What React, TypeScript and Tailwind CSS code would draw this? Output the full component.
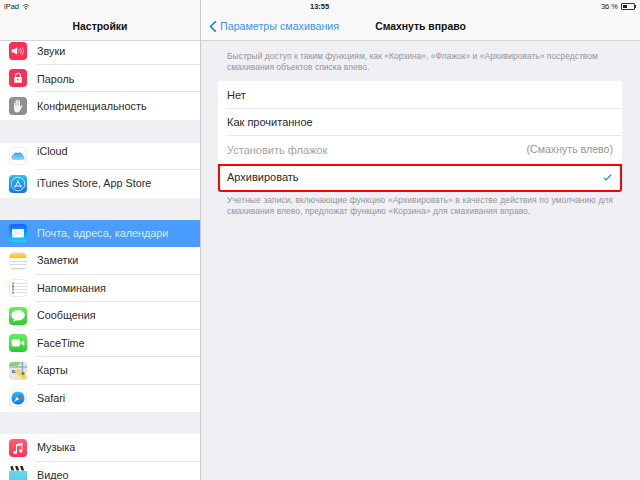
import type { ReactNode } from 'react'

const font = "font-['Liberation_Sans',Arial,sans-serif]"

function Tile({ className, children }: { className: string; children?: ReactNode }) {
  return (
    <div className={`flex size-[18px] shrink-0 items-center justify-center overflow-hidden rounded-[4px] ${className}`}>
      {children}
    </div>
  )
}

const SoundIcon = () => (
  <Tile className="bg-[#fe2d55]">
    <svg viewBox="0 0 18 18" className="size-[18px]" fill="none">
      <path d="M2.6 7.4h2.2L8.2 5.2v7.6L4.8 10.6H2.6z" fill="#fff" />
      <path d="M9.6 7.2a2.6 2.6 0 0 1 0 3.6M11.2 6a4.4 4.4 0 0 1 0 6M12.8 4.8a6.2 6.2 0 0 1 0 8.4" stroke="#ffc4d0" strokeWidth="0.9" />
    </svg>
  </Tile>
)

const LockIcon = () => (
  <Tile className="bg-[#fe2d55]">
    <svg viewBox="0 0 18 18" className="size-[18px]" fill="none">
      <path d="M6.6 8.5V6.6a2.4 2.4 0 0 1 4.8 0v1.9" stroke="#fff" strokeWidth="1.1" />
      <rect x="5.2" y="8" width="7.6" height="5.8" rx="0.6" fill="#fff" />
      <circle cx="9" cy="10.6" r="0.9" fill="#fe2d55" />
    </svg>
  </Tile>
)

const HandIcon = () => (
  <Tile className="bg-[#8e8e93]">
    <svg viewBox="0 0 18 18" className="size-[18px]" fill="#f2f2f2">
      <path d="M5 6.2c0-.8 1.2-.8 1.2 0v2.5h.4V3.6c0-.8 1.2-.8 1.2 0v4.9h.4V2.8c0-.8 1.2-.8 1.2 0v5.7h.4V3.8c0-.8 1.2-.8 1.2 0V10l1-1.4c.6-.8 1.7-.1 1.2.7l-2 3.9c-.6 1.2-1.3 2.3-2.9 2.3-2.2 0-3.3-1.4-3.3-3.4z" />
    </svg>
  </Tile>
)

const CloudIcon = () => (
  <Tile className="border border-[#ececec] bg-white">
    <svg viewBox="0 0 18 18" className="size-[18px]">
      <defs>
        <linearGradient id="cloudFill" x1="0" y1="0" x2="0" y2="1">
          <stop offset="0" stopColor="#2fa8f4" />
          <stop offset="1" stopColor="#8fd8fb" />
        </linearGradient>
      </defs>
      <path d="M4.4 13.6a3 3 0 0 1-.6-5.9 3.2 3.2 0 0 1 4.7-2.2 4 4 0 0 1 5.8 2.6 2.8 2.8 0 0 1-.4 5.5z" fill="url(#cloudFill)" />
    </svg>
  </Tile>
)

const AppStoreIcon = () => (
  <Tile className="bg-gradient-to-b from-[#30bdf9] to-[#1d70ec]">
    <svg viewBox="0 0 18 18" className="size-[18px]" fill="none" stroke="#fff">
      <circle cx="9" cy="9" r="6.8" strokeWidth="0.7" />
      <path d="M6 12.6 9.2 5.6M12 12.6 8.8 5.6M5 11h8" strokeWidth="0.9" />
    </svg>
  </Tile>
)

const MailIcon = () => (
  <Tile className="bg-gradient-to-b from-[#1d62f0] to-[#19d5fd]">
    <svg viewBox="0 0 18 18" className="size-[18px]">
      <rect x="3" y="5" width="12" height="8.4" rx="0.7" fill="#fff" />
      <path d="M3.2 5.4 9 10l5.8-4.6M3.2 13 7 8.7M14.8 13 11 8.7" stroke="#9cc4f7" strokeWidth="0.5" fill="none" />
    </svg>
  </Tile>
)

const NotesIcon = () => (
  <Tile className="border border-[#ececec] bg-white">
    <div className="flex size-full flex-col">
      <div className="h-[5px] shrink-0 bg-gradient-to-b from-[#fedb4c] to-[#fdc40b]" />
      <div className="mt-[3px] h-px bg-[#d6d6d6]" />
      <div className="mt-[3px] h-px bg-[#d6d6d6]" />
      <div className="mt-[3px] h-px bg-[#d6d6d6]" />
    </div>
  </Tile>
)

const RemindersIcon = () => (
  <Tile className="border border-[#ececec] bg-white">
    <svg viewBox="0 0 18 18" className="size-[18px]">
      <rect x="2.2" y="2.6" width="2.6" height="2.6" rx="0.8" fill="#fe9a1c" />
      <rect x="2.2" y="6" width="2.6" height="2.6" rx="0.8" fill="#27a6f5" />
      <rect x="2.2" y="9.4" width="2.6" height="2.6" rx="0.8" fill="#7ad13f" />
      <rect x="2.2" y="12.8" width="2.6" height="2.6" rx="0.8" fill="#cc73e1" />
      <path d="M6 3.9h12M6 7.3h12M6 10.7h12M6 14.1h12" stroke="#d4d4d4" strokeWidth="0.8" />
    </svg>
  </Tile>
)

const MessagesIcon = () => (
  <Tile className="bg-gradient-to-b from-[#6cec5c] to-[#22cc30]">
    <svg viewBox="0 0 18 18" className="size-[18px]">
      <path d="M9 3c3.9 0 6.8 2.3 6.8 5.2s-2.9 5.2-6.8 5.2c-.6 0-1.2 0-1.8-.2-.8.8-2 1.3-3.4 1.3.7-.6 1.1-1.4 1.2-2.2-1.6-.9-2.8-2.4-2.8-4.1C2.2 5.3 5.1 3 9 3z" fill="#fff" />
    </svg>
  </Tile>
)

const FaceTimeIcon = () => (
  <Tile className="bg-gradient-to-b from-[#6cec5c] to-[#22cc30]">
    <svg viewBox="0 0 18 18" className="size-[18px]" fill="#fff">
      <rect x="2.6" y="5.6" width="8.6" height="6.8" rx="1.3" />
      <path d="m11.8 8.4 3.4-2.4v6l-3.4-2.4z" />
    </svg>
  </Tile>
)

const MapsIcon = () => (
  <Tile className="bg-[#efe9d8]">
    <svg viewBox="0 0 18 18" className="size-[18px]">
      <rect width="18" height="18" fill="#ece5d2" />
      <path d="M0 0h13L8 4H0z" fill="#8ccf6e" />
      <path d="M0 5h18" stroke="#5aa5e8" strokeWidth="1.2" />
      <path d="M3 8h8v3H3z" fill="#4f8fe6" />
      <path d="M5 9 15 18h3v-3L9 7z" fill="#fcd84a" />
      <path d="M13.5 0v12" stroke="#7fa7d9" strokeWidth="1.4" />
      <circle cx="14" cy="11.5" r="1.6" fill="#2f7de1" />
      <path d="M15.5 0H18v4z" fill="#f6c7d0" />
    </svg>
  </Tile>
)

const SafariIcon = () => (
  <Tile className="border border-[#ececec] bg-white">
    <svg viewBox="0 0 18 18" className="size-[18px]">
      <defs>
        <linearGradient id="safariFill" x1="0" y1="0" x2="0" y2="1">
          <stop offset="0" stopColor="#1fc4f8" />
          <stop offset="1" stopColor="#1d6ff0" />
        </linearGradient>
      </defs>
      <circle cx="9" cy="9" r="7.4" fill="url(#safariFill)" />
      <path d="M13.6 4.4 7.8 7.8 10.2 10.2z" fill="#fe3b30" />
      <path d="M4.4 13.6 7.8 7.8 10.2 10.2z" fill="#fff" />
    </svg>
  </Tile>
)

const MusicIcon = () => (
  <Tile className="bg-gradient-to-b from-[#fe5f6f] to-[#fd2d55]">
    <svg viewBox="0 0 18 18" className="size-[18px]" fill="#fff">
      <path d="M7 5.2 13.4 3.8v8.2a1.8 1.5 0 1 1-1-1.3V6.2L8 7.2v6.2a1.8 1.5 0 1 1-1-1.3z" />
    </svg>
  </Tile>
)

const VideoIcon = () => (
  <Tile className="rounded-b-none bg-gradient-to-b from-[#62e2ee] to-[#5ac8ea]">
    <svg viewBox="0 0 18 18" className="size-[18px]">
      <rect width="18" height="5" fill="#fff" />
      <path d="M1 0h2.6l1.6 4.6H2.6zM6 0h2.6l1.6 4.6H7.6zM11 0h2.6l1.6 4.6h-2.6z" fill="#222" />
    </svg>
  </Tile>
)

function Row({
  icon,
  label,
  active,
  last,
  labelClass = '',
}: {
  icon: ReactNode
  label: string
  active?: boolean
  last?: boolean
  labelClass?: string
}) {
  return (
    <div className={`flex h-[27.5px] shrink-0 items-center pl-[9px] ${active ? 'bg-[#4a9dfd]' : 'bg-white'}`}>
      {icon}
      <div
        className={`ml-[10px] flex h-full flex-1 items-center text-[10.8px] ${labelClass} ${
          active ? 'text-[#d9ebff]' : 'text-[#2a2a2a]'
        } ${last || active ? 'pb-px' : 'border-b border-[#e3e3e5]'}`}
      >
        {label}
      </div>
    </div>
  )
}

function OptionRow({ children, border, className = '' }: { children: ReactNode; border?: boolean; className?: string }) {
  return (
    <div className={`flex h-[27.5px] items-center justify-between pr-[9px] text-[11px] ${border ? 'border-b border-[#e9e9eb]' : ''} ${className}`}>
      {children}
    </div>
  )
}

export default function App() {
  return (
    <div className={`flex h-[480px] w-[640px] overflow-hidden bg-[#efeff4] ${font}`}>
      {/* left list */}
      <aside className="flex h-full w-[201px] shrink-0 flex-col overflow-hidden border-r border-[#c9c9cc]">
        <header className="h-[41px] shrink-0 border-b border-[#d4d4d6] bg-[#f8f8f8]">
          <div className="flex h-[13px] items-center gap-[3px] pl-[4px] text-[7.5px] text-[#222]">
            <span>iPad</span>
            <svg viewBox="0 0 10 8" className="h-[6px] w-[8px]" fill="none" stroke="#333" strokeWidth="1">
              <path d="M0.6 2.8a6.4 6.4 0 0 1 8.8 0M2.2 4.6a4 4 0 0 1 5.6 0" />
              <path d="M3.6 6a2 2 0 0 1 2.8 0L5 7.6z" fill="#333" stroke="none" />
            </svg>
          </div>
          <div className="flex h-[27px] items-center justify-center text-[10.4px] font-bold text-[#111]">Настройки</div>
        </header>
        <div className="flex flex-1 flex-col overflow-hidden">
          <div className="-mt-[4px] flex flex-col">
            <Row icon={<SoundIcon />} label="Звуки" labelClass="pt-px" />
            <Row icon={<LockIcon />} label="Пароль" labelClass="pt-[2px]" />
            <Row icon={<HandIcon />} label="Конфиденциальность" last labelClass="pt-[2px]" />
          </div>
          <div className="h-[23px] shrink-0" />
          <Row icon={<CloudIcon />} label="iCloud" labelClass="pb-[9px]" />
          <Row icon={<AppStoreIcon />} label="iTunes Store, App Store" last />
          <div className="h-[22px] shrink-0" />
          <Row icon={<MailIcon />} label="Почта, адреса, календари" active />
          <Row icon={<NotesIcon />} label="Заметки" />
          <Row icon={<RemindersIcon />} label="Напоминания" />
          <Row icon={<MessagesIcon />} label="Сообщения" />
          <Row icon={<FaceTimeIcon />} label="FaceTime" />
          <Row icon={<MapsIcon />} label="Карты" />
          <Row icon={<SafariIcon />} label="Safari" last />
          <div className="h-[22px] shrink-0" />
          <Row icon={<MusicIcon />} label="Музыка" />
          <Row icon={<VideoIcon />} label="Видео" />
        </div>
      </aside>

      {/* right detail */}
      <main className="flex h-full flex-1 flex-col">
        <header className="h-[41px] shrink-0 border-b border-[#d4d4d6] bg-[#f8f8f8]">
          <div className="flex h-[13px] items-center justify-between pl-[109px] pr-[4px] text-[7.5px] text-[#222]">
            <span className="font-bold">13:55</span>
            <div className="flex items-center gap-[3px]">
              <span>36 %</span>
              <div className="flex items-center">
                <div className="h-[7px] w-[14px] rounded-[1px] border border-[#333] p-px">
                  <div className="h-full w-[4px] bg-[#222]" />
                </div>
                <div className="h-[3px] w-px bg-[#333]" />
              </div>
            </div>
          </div>
          <div className="grid h-[27px] grid-cols-[1fr_auto_1fr] items-center">
            <div className="flex items-center">
              <svg viewBox="0 0 10 16" className="ml-[8px] h-[13px] w-[8px]" fill="none" stroke="#1f85fa" strokeWidth="2.2">
                <path d="M8.5 1.5 2 8l6.5 6.5" />
              </svg>
              <span className="ml-[3px] whitespace-nowrap text-[10.7px] text-[#3a94fb]">Параметры смахивания</span>
            </div>
            <span className="text-[10.4px] font-bold text-[#111]">Смахнуть вправо</span>
            <span />
          </div>
        </header>
        <div className="flex flex-1 flex-col pl-[17px] pr-[18px] pt-[10px]">
          <p className="px-[9px] text-[8.5px] leading-[10.5px] text-[#96969a]">
            Быстрый доступ к таким функциям, как «Корзина», «Флажок» и «Архивировать» посредством смахивания объектов списка влево.
          </p>
          <div className="mt-[9px] rounded-[3px] bg-white pl-[9px]">
            <OptionRow border className="pt-px">
              <span className="text-[#2a2a2a]">Нет</span>
            </OptionRow>
            <OptionRow border>
              <span className="text-[#2a2a2a]">Как прочитанное</span>
            </OptionRow>
            <OptionRow>
              <span className="text-[#a3a3a7]">Установить флажок</span>
              <span className="text-[10.6px] text-[#96969a]">(Смахнуть влево)</span>
            </OptionRow>
            <div className="-ml-[9px] flex h-[28.5px] items-center justify-between rounded-b-[3px] border-2 border-[#f00] pb-px pl-[7px] pr-[8px] text-[11px] text-[#2a2a2a]">
              <span>Архивировать</span>
              <svg viewBox="0 0 12 10" className="h-[7px] w-[9px]" fill="none" stroke="#1f85fa" strokeWidth="1.8">
                <path d="M1 5.5 4 8.5 11 1" />
              </svg>
            </div>
          </div>
          <p className="mt-[3px] px-[9px] text-[8.5px] leading-[10.5px] [word-spacing:0.35px] text-[#96969a]">
            Учетные записи, включающие функцию «Архивировать» в качестве действия по умолчанию для смахивания влево, предложат функцию «Корзина» для смахивания вправо.
          </p>
        </div>
      </main>
    </div>
  )
}
